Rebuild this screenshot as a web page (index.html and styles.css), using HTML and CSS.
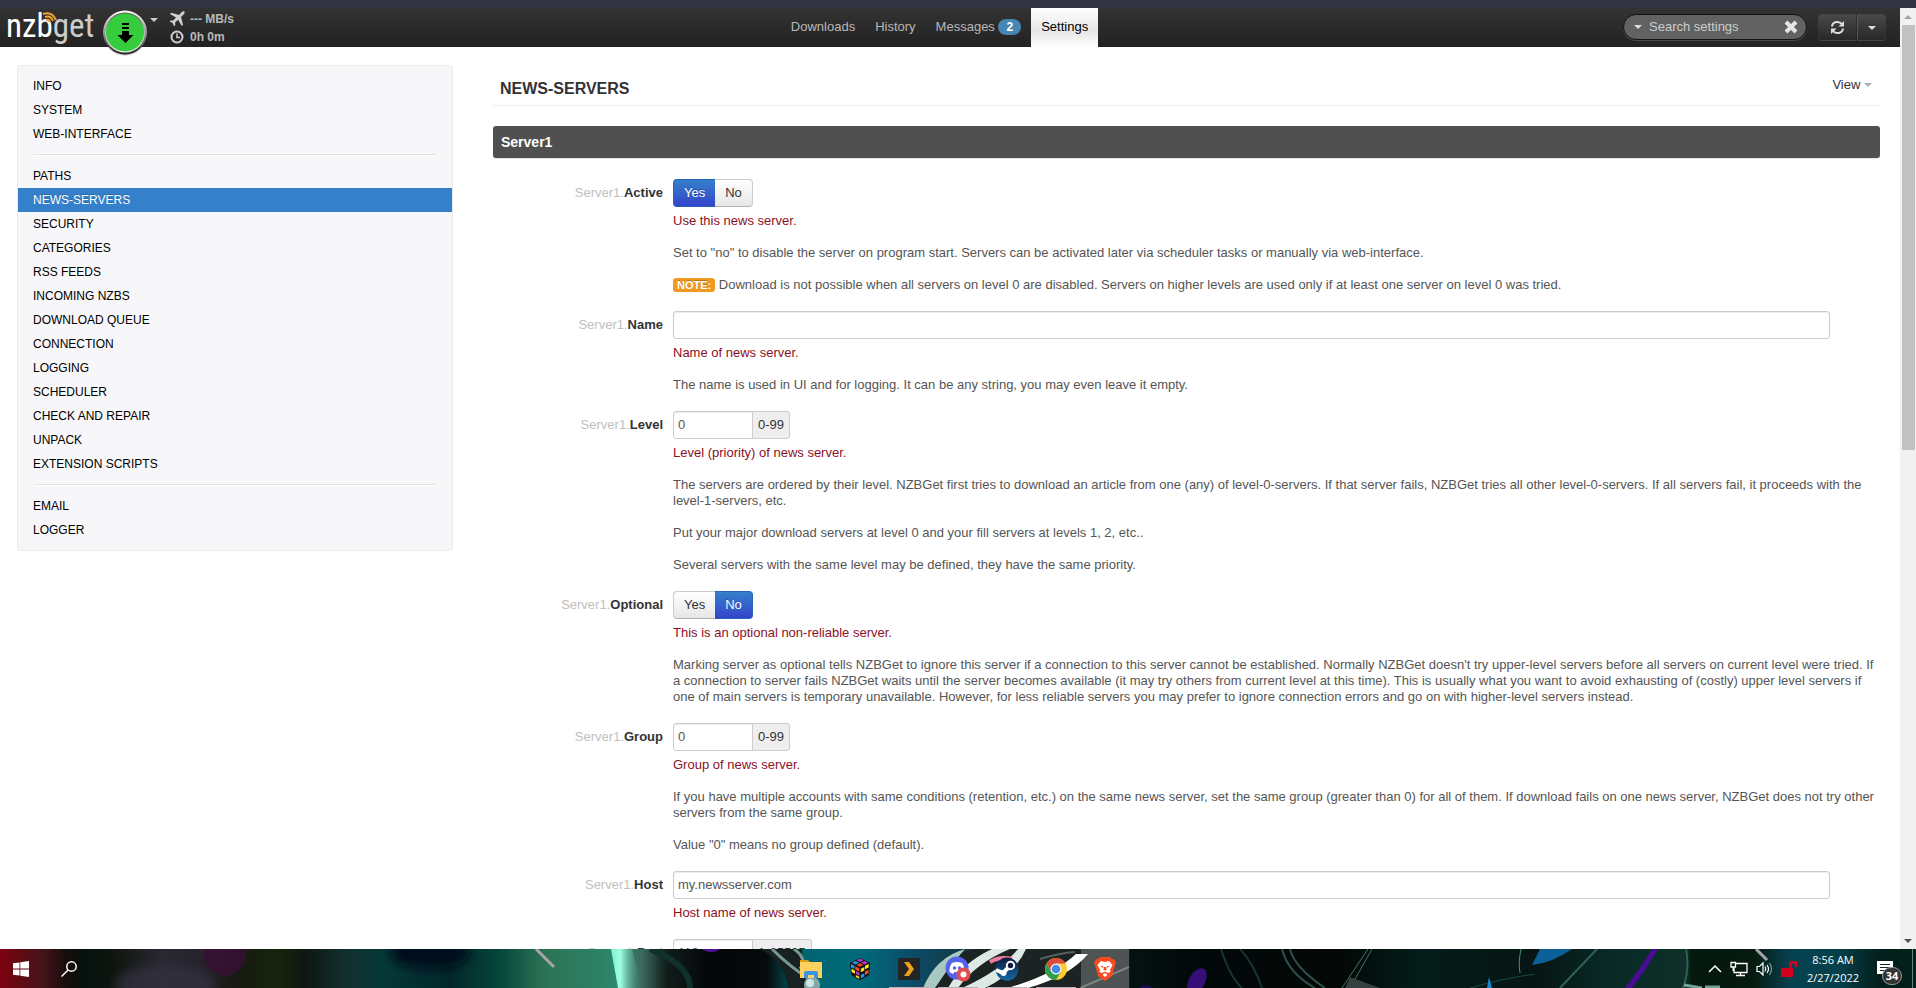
FILE: index.html
```html
<!DOCTYPE html>
<html lang="en">
<head>
<meta charset="utf-8">
<title>NZBGet - Settings</title>
<link rel="stylesheet" href="styles.css">
</head>
<body>
<div class="window-edge"></div>
<div class="browser">
  <div class="page">
    <header class="navbar">
      <div class="nav-left">
        <a class="brand" href="#" aria-label="nzbget"><span class="brand-nzb">nzb</span><span class="brand-get">get</span>
          <svg class="brand-waves" width="16" height="11" viewBox="0 0 16 11" fill="none" stroke="#f0a030" stroke-width="2"><path d="M1 2Q10-1 14 8M3 5Q9 3 11 9M4 8Q7 7 8 10"/></svg>
        </a>
        <button class="play" type="button" aria-label="Pause downloads">
          <svg width="46" height="46" viewBox="0 0 46 46">
            <defs>
              <linearGradient id="rim" x1="0" y1="0" x2="0" y2="1"><stop offset="0" stop-color="#fff"/><stop offset=".5" stop-color="#999"/><stop offset="1" stop-color="#222"/></linearGradient>
              <linearGradient id="rim2" x1="0" y1="0" x2="0" y2="1"><stop offset="0" stop-color="#555"/><stop offset=".5" stop-color="#bbb"/><stop offset="1" stop-color="#fff"/></linearGradient>
            </defs>
            <circle cx="23" cy="23.500" r="22" fill="#000" opacity=".25"/>
            <circle cx="23" cy="22.500" r="22" fill="url(#rim)"/>
            <circle cx="23" cy="22.500" r="20" fill="url(#rim2)"/>
            <circle cx="23" cy="22.500" r="19" fill="#35cc3d"/>
            <path d="M20 13h7v2h-7zM20 17h7v2h-7zM20 21h7v4h4.500l-8 8-8-8H20z" fill="#000"/>
          </svg>
        </button>
        <span class="caret speed-caret"></span>
        <div class="stats">
          <div class="stat">
            <svg width="16" height="16" viewBox="0 0 16 16" fill="#d0d0d0"><path d="M15.500.500c-1.200-.6-2.500.2-3.500 1.300L10 3.900 2.200 1.800 1 3l6 3.600-2.700 3L1.700 9.400.6 10.500l3 1.500 1.500 3.200 1.200-1.100-.2-2.700 3-2.700L12.800 15l1.200-1.200L12 6l2-2c1.100-1 2-2.300 1.500-3.500z"/></svg>
            <span>--- MB/s</span>
          </div>
          <div class="stat">
            <svg width="16" height="16" viewBox="0 0 16 16" fill="none" stroke="#d0d0d0" stroke-width="2"><circle cx="8" cy="8" r="5.500"/><path d="M8 4.500V8.500H11" stroke-width="1.500"/></svg>
            <span>0h 0m</span>
          </div>
        </div>
      </div>
      <nav class="menu">
        <a href="#">Downloads</a>
        <a href="#">History</a>
        <a href="#">Messages <span class="badge">2</span></a>
        <a href="#" class="active">Settings</a>
      </nav>
      <div class="nav-right">
        <div class="search">
          <span class="caret"></span>
          <input type="text" placeholder="Search settings" aria-label="Search settings">
          <button type="button" aria-label="Clear search"><svg width="14" height="14" viewBox="0 0 14 14" stroke="#e6e6e6" stroke-width="4"><path d="M2 2l10 10M12 2L2 12"/></svg></button>
        </div>
        <div class="refresh-group">
          <button class="refresh" type="button" aria-label="Refresh"><svg width="15" height="15" viewBox="0 0 15 15"><path d="M2 6.500C2.500 1.500 9 .5 12 4.200M13 8.500C12.500 13.500 6 14.500 3 10.800" fill="none" stroke="#ddd" stroke-width="2"/><path d="M14 1v5.500H8.500zM1 14V8.500h5.500z" fill="#ddd"/></svg></button>
          <button class="refresh-menu" type="button" aria-label="Refresh interval"><span class="caret"></span></button>
        </div>
      </div>
    </header>
    <div class="columns">
      <nav class="sidebar">
        <a href="#">INFO</a>
        <a href="#">SYSTEM</a>
        <a href="#">WEB-INTERFACE</a>
        <hr>
        <a href="#">PATHS</a>
        <a href="#" class="active">NEWS-SERVERS</a>
        <a href="#">SECURITY</a>
        <a href="#">CATEGORIES</a>
        <a href="#">RSS FEEDS</a>
        <a href="#">INCOMING NZBS</a>
        <a href="#">DOWNLOAD QUEUE</a>
        <a href="#">CONNECTION</a>
        <a href="#">LOGGING</a>
        <a href="#">SCHEDULER</a>
        <a href="#">CHECK AND REPAIR</a>
        <a href="#">UNPACK</a>
        <a href="#">EXTENSION SCRIPTS</a>
        <hr>
        <a href="#">EMAIL</a>
        <a href="#">LOGGER</a>
      </nav>
      <main class="content">
        <div class="content-head">
          <h1>NEWS-SERVERS</h1>
          <a class="view" href="#">View <span class="caret"></span></a>
        </div>
        <h2 class="section">Server1</h2>

        <div class="option">
          <span class="name" id="l-active"><i>Server1.</i>Active</span>
          <div>
            <div class="toggle" role="group" aria-labelledby="l-active"><button type="button" class="on">Yes</button><button type="button">No</button></div>
            <div class="help">
              <p class="lead">Use this news server.</p>
              <p>Set to "no" to disable the server on program start. Servers can be activated later via scheduler tasks or manually via web-interface.</p>
              <p><span class="note">NOTE:</span> Download is not possible when all servers on level 0 are disabled. Servers on higher levels are used only if at least one server on level 0 was tried.</p>
            </div>
          </div>
        </div>

        <div class="option">
          <label class="name" for="f-name"><i>Server1.</i>Name</label>
          <div>
            <div class="wide"><input id="f-name" type="text"></div>
            <div class="help">
              <p class="lead">Name of news server.</p>
              <p>The name is used in UI and for logging. It can be any string, you may even leave it empty.</p>
            </div>
          </div>
        </div>

        <div class="option">
          <label class="name" for="f-level"><i>Server1.</i>Level</label>
          <div>
            <div class="ranged"><input id="f-level" type="text" value="0"><span>0-99</span></div>
            <div class="help">
              <p class="lead">Level (priority) of news server.</p>
              <p>The servers are ordered by their level. NZBGet first tries to download an article from one (any) of level-0-servers. If that server fails, NZBGet tries all other level-0-servers. If all servers fail, it proceeds with the level-1-servers, etc.</p>
              <p>Put your major download servers at level 0 and your fill servers at levels 1, 2, etc..</p>
              <p>Several servers with the same level may be defined, they have the same priority.</p>
            </div>
          </div>
        </div>

        <div class="option">
          <span class="name" id="l-optional"><i>Server1.</i>Optional</span>
          <div>
            <div class="toggle" role="group" aria-labelledby="l-optional"><button type="button">Yes</button><button type="button" class="on">No</button></div>
            <div class="help">
              <p class="lead">This is an optional non-reliable server.</p>
              <p>Marking server as optional tells NZBGet to ignore this server if a connection to this server cannot be established. Normally NZBGet doesn't try upper-level servers before all servers on current level were tried. If a connection to server fails NZBGet waits until the server becomes available (it may try others from current level at this time). This is usually what you want to avoid exhausting of (costly) upper level servers if one of main servers is temporary unavailable. However, for less reliable servers you may prefer to ignore connection errors and go on with higher-level servers instead.</p>
            </div>
          </div>
        </div>

        <div class="option">
          <label class="name" for="f-group"><i>Server1.</i>Group</label>
          <div>
            <div class="ranged"><input id="f-group" type="text" value="0"><span>0-99</span></div>
            <div class="help">
              <p class="lead">Group of news server.</p>
              <p>If you have multiple accounts with same conditions (retention, etc.) on the same news server, set the same group (greater than 0) for all of them. If download fails on one news server, NZBGet does not try other servers from the same group.</p>
              <p>Value "0" means no group defined (default).</p>
            </div>
          </div>
        </div>

        <div class="option">
          <label class="name" for="f-host"><i>Server1.</i>Host</label>
          <div>
            <div class="wide"><input id="f-host" type="text" value="my.newsserver.com"></div>
            <div class="help"><p class="lead">Host name of news server.</p></div>
          </div>
        </div>

        <div class="option">
          <label class="name" for="f-port"><i>Server1.</i>Port</label>
          <div>
            <div class="ranged"><input id="f-port" type="text" value="119"><span>1-65535</span></div>
          </div>
        </div>
      </main>
    </div>
  </div>
  <div class="scrollbar">
    <span class="arrow up"></span>
    <span class="thumb"></span>
    <span class="rest"></span>
    <span class="arrow down"></span>
  </div>
</div>

<footer class="taskbar">
  <svg class="wallpaper" viewBox="0 0 1916 39" preserveAspectRatio="none" aria-hidden="true">
    <defs>
      <linearGradient id="wall" x1="0" x2="1916" y1="0" y2="0" gradientUnits="userSpaceOnUse">
        <stop offset="0" stop-color="#7c0210"/><stop offset=".01" stop-color="#620a12"/><stop offset=".022" stop-color="#45141c"/><stop offset=".035" stop-color="#140c0b"/><stop offset=".045" stop-color="#04120e"/><stop offset=".06" stop-color="#101610"/><stop offset=".085" stop-color="#2a2832"/><stop offset=".105" stop-color="#25232c"/><stop offset=".125" stop-color="#161a10"/><stop offset=".145" stop-color="#17240c"/><stop offset=".16" stop-color="#0c1712"/><stop offset=".18" stop-color="#12302c"/><stop offset=".2" stop-color="#053838"/><stop offset=".235" stop-color="#02262a"/><stop offset=".26" stop-color="#04463a"/><stop offset=".285" stop-color="#2d7456"/><stop offset=".31" stop-color="#2c8063"/><stop offset=".323" stop-color="#2c8870"/><stop offset=".335" stop-color="#3c6a5e"/><stop offset=".348" stop-color="#101d1a"/><stop offset=".37" stop-color="#040607"/><stop offset=".4" stop-color="#060a0a"/><stop offset=".418" stop-color="#006470"/><stop offset=".45" stop-color="#006a7a"/><stop offset=".475" stop-color="#0c4d6a"/><stop offset=".5" stop-color="#123c48"/><stop offset=".53" stop-color="#1c2826"/><stop offset=".56" stop-color="#29302e"/><stop offset=".588" stop-color="#303836"/><stop offset=".59" stop-color="#031210"/><stop offset=".63" stop-color="#020808"/><stop offset=".7" stop-color="#030807"/><stop offset=".74" stop-color="#041d1a"/><stop offset=".8" stop-color="#061514"/><stop offset=".84" stop-color="#082a25"/><stop offset=".88" stop-color="#0f3029"/><stop offset=".883" stop-color="#04180f"/><stop offset=".915" stop-color="#061a10"/><stop offset=".935" stop-color="#064352"/><stop offset=".96" stop-color="#05404a"/><stop offset=".98" stop-color="#04201c"/><stop offset="1" stop-color="#03201a"/>
      </linearGradient>
      <filter id="soft" x="-50%" y="-50%" width="200%" height="200%"><feGaussianBlur stdDeviation="5"/></filter>
      <linearGradient id="glow"><stop offset="0" stop-color="#7df0cc"/><stop offset=".3" stop-color="#a0ffe4"/><stop offset="1" stop-color="#4a8a7c" stop-opacity="0"/></linearGradient>
    </defs>
    <rect width="1916" height="39" fill="url(#wall)"/>
    <ellipse cx="430" cy="4" rx="40" ry="16" fill="#00101a" filter="url(#soft)"/>
    <ellipse cx="165" cy="36" rx="50" ry="20" fill="#353142" opacity=".7" filter="url(#soft)"/>
    <ellipse cx="225" cy="5" rx="21" ry="22" fill="#3a0f36" opacity=".8"/>
    <path d="M536 0L554 18" stroke="#a9a4aa" stroke-width="3"/>
    <path d="M611 0H632L642 39H618z" fill="url(#glow)"/>
    <path d="M650 0Q690 16 690 39" stroke="#11302b" stroke-width="6" fill="none"/>
    <ellipse cx="711" cy="-1" rx="9" ry="4" fill="#4b1390"/>
    <path d="M760 0Q786 14 788 39H820Q802 18 802 0z" fill="#17211f"/>
    <path d="M772 0Q790 18 812 32M794 0Q808 10 800 20" stroke="#799895" stroke-width="3" fill="none"/>
    <circle cx="812" cy="36" r="8" fill="#83aaa9"/><circle cx="810" cy="34" r="4" fill="#d0e6e3"/>
    <path d="M923 39Q936 8 975 0H1129V39z" fill="#1b2423"/>
    <path d="M923 39Q936 8 965 0L948 20 935 39z" fill="#a9c8c2"/>
    <path d="M948 39Q962 14 992 0H1010Q976 14 958 39zM962 39Q1000 22 1018 0H1026Q1015 25 985 39z" fill="#dce9e5"/>
    <path d="M1008 39Q1055 25 1076 5H1088Q1070 27 1028 39z" fill="#fff"/>
    <path d="M1040 10Q1060 4 1075 3M1080 39L1129 18" stroke="#56615f" stroke-width="2" fill="none"/>
    <path d="M990 13Q1000 7 1012 10" stroke="#ec7f9c" stroke-width="4" fill="none"/>
    <path d="M1221 0Q1230 28 1242 39M1240 0Q1254 15 1262 39" stroke="#143530" stroke-width="2" fill="none"/>
    <ellipse cx="1197" cy="32" rx="8" ry="14" transform="rotate(30 1197 32)" fill="#360e77"/>
    <ellipse cx="1146" cy="39" rx="6" ry="3" fill="#1d0b54"/>
    <path d="M1282 0Q1288 24 1315 39M1290 0Q1294 18 1325 39" stroke="#2c5149" stroke-width="2" fill="none"/>
    <path d="M1372 0L1350 39M1368 0L1342 39" stroke="#3e7467" stroke-width="1" fill="none"/>
    <path d="M1350 28L1380 39H1345z" fill="#34423f"/>
    <path d="M1521 0Q1518 14 1520 24" stroke="#4a8d84" fill="none"/>
    <path d="M1540 0H1572Q1552 14 1532 16z" fill="#0d5f98"/>
    <path d="M1535 25Q1500 30 1470 39" stroke="#174b42" fill="none"/>
    <path d="M1487 39L1489 28 1492 39z" fill="#1689cf"/>
    <path d="M1597 0L1560 39M1686 0Q1690 20 1683 39" stroke="#2d6156" stroke-width="2" fill="none"/>
    <path d="M1652 0H1658Q1645 22 1632 39H1625Q1640 20 1652 0z" fill="#470d95"/>
    <path d="M1756 0L1767 11" stroke="#a9a4aa" stroke-width="3"/>
    <path d="M1684 36L1702 39M1705 38H1720" stroke="#6fa393" stroke-width="3"/>
  </svg>
  <div class="task-left">
    <button type="button" aria-label="Start"><svg width="16" height="16" viewBox="0 0 16 16" fill="#fff"><path d="M0 2.300L6.500 1.400V7.500H0zM7.300 1.300L16 0v7.500H7.300zM0 8.400h6.500v6.200L0 13.700zM7.300 8.400H16V16L7.300 14.800z"/></svg></button>
    <button type="button" aria-label="Search"><svg width="16" height="16" viewBox="0 0 16 16" fill="none" stroke="#fff" stroke-width="1.500"><circle cx="10.500" cy="5.500" r="4.700"/><path d="M7 9L.5 15.500"/></svg></button>
  </div>
  <div class="task-apps">
    <button type="button" aria-label="File Explorer"><svg width="24" height="24" viewBox="0 0 24 24"><path d="M1 3h8l2 2h-10z" fill="#e0a010"/><path d="M1 5h22v16H1z" fill="#fdd062"/><path d="M5 21v-5q0-2 2-2h10q2 0 2 2v5h-4v-3H9v3z" fill="#3b95e0"/></svg></button>
    <button type="button" aria-label="Cube"><svg width="24" height="24" viewBox="0 0 24 24"><path d="M12 1l10 5-1 12-9 5-9-5L2 6z" fill="#111"/><path d="M12 1.500l3.500 1.700L12 5 8.500 3.200zM16.500 7.500L13 5.800 16.500 4 20 5.800zM8 14l3.500 1.800v3L8 17z" fill="#b637c9"/><path d="M7.500 4L11 5.700 7.500 7.500 4 5.700zM3 7l3.500 1.700v3.300L3 10.300zM12.800 18l3.500-1.800v3.300l-3.500 1.800z" fill="#2b97e8"/><path d="M12 6.300L15.500 8 12 9.800 8.500 8zM7.300 9.300l4 2v3.300l-4-2zM17 14.500l3.500-1.700v3.400L17 18z" fill="#f04c21"/><path d="M12.800 11.800l3.500-1.700v3.400l-3.500 1.800zM17 8.700L20.700 7v3.400L17 12.200zM3.500 11.800L7 13.500v3.300l-3.500-1.700zM7.800 18l3.500 1.700v2L7.800 20z" fill="#ffe51f"/></svg></button>
    <button type="button" class="running" aria-label="Plex"><svg width="22" height="22" viewBox="0 0 22 22"><rect width="22" height="22" fill="#242424"/><path d="M6 4h5l5 7-5 7H6l5-7z" fill="#eda21b"/></svg></button>
    <button type="button" class="running" aria-label="Discord"><svg width="26" height="26" viewBox="0 0 26 26"><circle cx="12" cy="12" r="11.500" fill="#5563ec"/><path d="M7 7q5-2 10 0 3 4 2.500 9L16 18l-1.500-2h-5L8 18l-3.500-2Q4 11 7 7z" fill="#fff"/><circle cx="9.500" cy="12" r="1.700" fill="#5563ec"/><circle cx="14.500" cy="12" r="1.700" fill="#5563ec"/><circle cx="18.500" cy="18.500" r="7" fill="#e24d4f"/><circle cx="18.500" cy="18.500" r="3" fill="#fff"/></svg></button>
    <button type="button" class="running" aria-label="Steam"><svg width="24" height="24" viewBox="0 0 24 24"><defs><linearGradient id="steam" x2="0" y2="1"><stop offset="0" stop-color="#101a3c"/><stop offset="1" stop-color="#126aa5"/></linearGradient></defs><circle cx="12" cy="12" r="11.500" fill="url(#steam)"/><path d="M1 13l7 3 5-5" stroke="#fff" stroke-width="4" fill="none"/><circle cx="15.500" cy="8.500" r="3.700" fill="#101a3c" stroke="#fff" stroke-width="2"/><circle cx="8.500" cy="16" r="3" fill="#fff"/></svg></button>
    <button type="button" class="running" aria-label="Chrome"><svg width="24" height="24" viewBox="0 0 24 24"><circle cx="12" cy="12" r="11" fill="#fdcb2f"/><path d="M2.500 6.500A11 11 0 0 1 21.500 6.500H12L7.200 14.700z" fill="#dc4a3d"/><path d="M2.500 6.500A11 11 0 0 0 12 23l4.800-8.200L7.200 14.700z" fill="#2da04e"/><circle cx="12" cy="12" r="5.500" fill="#f4f4f4"/><circle cx="12" cy="12" r="4.300" fill="#4489ec"/></svg></button>
    <button type="button" class="current" aria-label="Brave"><svg width="22" height="24" viewBox="0 0 22 24"><path d="M6 0h10l2 2.300 2-.2L22 6l-1 2-3 11-7 5-7-5L1 8 0 6l2-3.900 2 .2z" fill="#fb4a20"/><path d="M7 4l4 1 4-1 3.500 4-2.500 5 .5 2-2.500 1-3-1.500L8 16l-2.500-1 .5-2-2.500-5zM11 16l2.500 1.700L11 20l-2.500-2.300z" fill="#fff"/><path d="M5.500 8.500l4 1-.5 1.500zM16.500 8.500l-4 1 .5 1.500zM10 10h2l.7 2.800-1.700.8-1.700-.8z" fill="#fb4a20"/></svg></button>
  </div>
  <div class="task-tray">
    <svg width="14" height="16" viewBox="0 0 14 16" fill="none" stroke="#fff" stroke-width="1.500"><path d="M1 11l6-6 6 6"/></svg>
    <svg width="18" height="16" viewBox="0 0 18 16" fill="none" stroke="#fff" stroke-width="1.300"><path d="M5.500 2.500H17v9H4V7M10.500 12v3M6 14.500h9M1 1.500h4.500V6H1zM3.200 6v4"/></svg>
    <svg width="17" height="16" viewBox="0 0 17 16" fill="none" stroke="#fff" stroke-width="1.200"><path d="M1 5.500h2.500L7 2v12l-3.500-3.500H1z"/><path d="M9 5.500q1.500 2.500 0 5M11 4q3 4 0 8"/><path d="M13.500 2q4 6 0 12" opacity=".5"/></svg>
    <svg width="16" height="17" viewBox="0 0 16 17"><path d="M9.500 8V2.500H15V7" fill="none" stroke="#d6001c" stroke-width="2.500"/><path d="M0 8h12v9H0z" fill="#d6001c"/></svg>
    <div class="clock"><span>8:56 AM</span><span>2/27/2022</span></div>
    <button class="notices" type="button" aria-label="34 notifications"><svg width="16" height="16" viewBox="0 0 16 16"><path d="M0 0h16v13h-5v3l-3-3H0z" fill="#fff"/><path d="M3 3.500h10M3 6.500h10M3 9.500h6" stroke="#17211f"/></svg><span>34</span></button>
  </div>
</footer>
</body>
</html>
```

FILE: styles.css
```css
* { box-sizing: border-box; }

body {
  margin: 0;
  height: 100vh;
  display: flex;
  flex-direction: column;
  overflow: hidden;
  background: #fff;
  color: #333;
  font: 13px/16px "Liberation Sans", Arial, Helvetica, sans-serif;
}

a { color: inherit; text-decoration: none; }
button, input { font: inherit; margin: 0; }
svg { display: block; flex: none; }

.caret {
  display: inline-block;
  border: 4px solid transparent;
  border-top-color: currentColor;
  border-bottom: 0;
}

.window-edge { flex: none; height: 8px; background: #323444; }

.browser { flex: 1; min-height: 0; display: flex; }
.page { flex: 1; min-width: 0; overflow: hidden; }

/* Top bar */
.navbar {
  display: grid;
  grid-template-columns: minmax(0, 781fr) auto minmax(0, 802fr);
  height: 39px;
  background: linear-gradient(#333, #222);
  color: #b8b8b8;
}

.nav-left { display: flex; align-items: flex-start; }

.brand {
  position: relative;
  width: 89px;
  margin-left: 6px;
  font: 33px/36px "Liberation Sans Narrow", "Roboto Condensed", "Open Sans", sans-serif;
  white-space: nowrap;
}
.brand-nzb { color: #fff; }
.brand-get { color: #ccc; }
.brand-waves { position: absolute; left: 36px; top: 4px; }

.play {
  margin: 2px 0 0 7px;
  padding: 0;
  border: 0;
  background: none;
  width: 46px;
  height: 46px;
}
.speed-caret { margin: 10px 11px 0 2px; color: #ccc; }

.stats { padding-top: 2px; font-size: 12px; font-weight: bold; }
.stat { display: flex; align-items: center; gap: 5px; height: 18px; }

.menu { display: flex; line-height: 38px; }
.menu a { padding: 0 10px; white-space: nowrap; }
.menu .active {
  height: 39px;
  background: linear-gradient(#fff, #e6e6e6 60%, #fff);
  color: #000;
}
.badge {
  display: inline-block;
  padding: 0 8px;
  border-radius: 8px;
  background: #4686b3;
  color: #fff;
  font-size: 12px;
  font-weight: bold;
  line-height: 16px;
}

.nav-right {
  display: flex;
  justify-content: flex-end;
  align-items: flex-start;
  gap: 11px;
  padding: 6px 14px 0 0;
}
.search {
  display: flex;
  align-items: center;
  width: 184px;
  height: 26px;
  padding: 0 8px 0 10px;
  border: 1px solid #111;
  border-radius: 13px;
  background: #626262;
  box-shadow: 0 1px 0 #484848;
  color: #ddd;
}
.search input {
  flex: 1;
  min-width: 0;
  padding: 0 0 0 7px;
  border: 0;
  background: none;
  color: #fff;
}
.search input::placeholder { color: #ccc; opacity: 1; }
.search button { padding: 0; border: 0; background: none; }

.refresh-group { display: flex; gap: 1px; height: 27px; }
.refresh-group button {
  display: flex;
  align-items: center;
  justify-content: center;
  padding: 0;
  border: 1px solid #444;
  border-width: 1px 0;
  background: linear-gradient(#484848, #282828);
  color: #ddd;
}
.refresh { width: 38px; border-radius: 4px 0 0 4px; }
.refresh-group .refresh-menu {
  width: 29px;
  border-left: 1px solid #555;
  border-radius: 0 4px 4px 0;
}

/* Two-column body */
.columns {
  display: grid;
  grid-template-columns: minmax(0, 436fr) minmax(0, 1387fr);
  gap: 40px;
  align-items: start;
  padding: 18px 20px 0 17px;
}

.sidebar {
  padding: 8px 0;
  border: 1px solid #eaeaec;
  border-radius: 4px;
  background: #f7f7f9;
  color: #000;
  font-size: 12px;
  line-height: 24px;
}
.sidebar a { display: block; padding: 0 15px; }
.sidebar .active {
  background: #3480cb;
  color: #fff;
  text-shadow: 0 -1px 0 rgba(0, 0, 0, .2);
}
.sidebar hr {
  margin: 8px 16px;
  border: 0;
  border-top: 1px solid #e2e2e4;
  border-bottom: 1px solid #fff;
}

.content-head {
  display: flex;
  justify-content: space-between;
  height: 41px;
  padding: 12px 8px 0 7px;
  border-bottom: 1px solid #eee;
}
h1 { margin: 0; font-size: 16px; line-height: 24px; }
.view .caret { vertical-align: 2px; color: #b0b0b0; }

.section {
  margin: 20px 0 21px;
  padding: 0 8px;
  border-radius: 3px;
  background: #505050;
  box-shadow: 0 1px 0 #e5e5e5;
  color: #fff;
  font-size: 14px;
  line-height: 32px;
}

.option {
  display: grid;
  grid-template-columns: 170px minmax(0, 1fr);
  gap: 10px;
  margin-bottom: 18px;
}
.name { font-weight: bold; line-height: 27px; text-align: right; }
.name i { color: #bfbfbf; font-style: normal; font-weight: normal; }

.toggle, .ranged { display: flex; height: 28px; }
.toggle button {
  padding: 0 10px;
  border: 1px solid #ccc;
  border-bottom-color: #b3b3b3;
  background: linear-gradient(#fff, #e6e6e6);
  color: #333;
}
.toggle button:first-child { border-right: 0; border-radius: 4px 0 0 4px; }
.toggle button:last-child { border-left: 0; border-radius: 0 4px 4px 0; }
.toggle .on {
  border-color: #2a62b4;
  background: linear-gradient(#3480cb, #3444cb);
  color: #fff;
  text-shadow: 0 -1px 0 rgba(0, 0, 0, .25);
}

.wide { margin-right: 50px; }
.wide input, .ranged input {
  display: block;
  width: 100%;
  height: 28px;
  padding: 0 4px 2px;
  border: 1px solid #ccc;
  border-radius: 3px;
  background: #fff;
  box-shadow: inset 0 1px 1px rgba(0, 0, 0, .075);
  color: #555;
}
.ranged input { width: 80px; border-radius: 3px 0 0 3px; }
.ranged span {
  margin-left: -1px;
  padding: 0 5px;
  border: 1px solid #ccc;
  border-radius: 0 3px 3px 0;
  background: #eee;
  line-height: 26px;
}

.help { padding-top: 6px; color: #555; }
.help p { margin: 0 0 16px; }
.help p:last-child { margin-bottom: 0; }
.help .lead { color: #8b0f1f; }
.note {
  padding: 1px 4px;
  border-radius: 3px;
  background: #f29a1f;
  color: #fff;
  font-size: 11px;
  font-weight: bold;
  line-height: 13px;
  text-shadow: 0 -1px 0 rgba(0, 0, 0, .25);
}

/* Scroll bar */
.scrollbar {
  flex: none;
  display: flex;
  flex-direction: column;
  width: 16px;
  background: #f1f1f1;
}
.scrollbar .thumb { flex: 425; margin: 0 1px 0 2px; background: #c1c1c1; }
.scrollbar .rest { flex: 482; }
.arrow { display: flex; align-items: center; justify-content: center; height: 17px; }
.arrow::before { content: ""; border: 4px solid transparent; }
.up::before { border-top: 0; border-bottom-color: #a3a3a3; }
.down::before { border-bottom: 0; border-top-color: #505050; }

/* Desktop task bar */
.taskbar {
  position: relative;
  flex: none;
  display: grid;
  grid-template-columns: 1fr auto 1fr;
  height: 39px;
  overflow: hidden;
  background: #04120f;
  color: #fff;
}
.taskbar > div { position: relative; display: flex; align-items: center; }
.wallpaper { position: absolute; inset: 0; width: 100%; height: 100%; }
.taskbar button {
  display: flex;
  align-items: center;
  justify-content: center;
  width: 48px;
  height: 39px;
  padding: 0;
  border: 0;
  background: none;
}
.task-left button:first-child { width: 42px; }
.task-left button:last-child { width: 54px; }
.task-apps { gap: 1px; }
.taskbar .running {
  background: linear-gradient(#b9b3b8, #b9b3b8) center bottom / 40px 1px no-repeat;
}
.taskbar .current { background: rgba(255, 255, 255, .22); }

.task-tray { justify-content: flex-end; gap: 8px; }
.clock {
  display: flex;
  flex-direction: column;
  width: 56px;
  font: 11px/18px "Open Sans", "Noto Sans", sans-serif;
  text-align: center;
}
.taskbar .notices {
  position: relative;
  width: 44px;
  margin-right: 3px;
  padding-right: 12px;
  border-right: 1px solid #68817a;
}
.notices span {
  position: absolute;
  left: 13px;
  top: 18px;
  width: 20px;
  height: 18px;
  border: 1px solid #999;
  border-radius: 9px;
  background: #333;
  color: #fff;
  font: bold 11px/16px "Open Sans", sans-serif;
}
```
